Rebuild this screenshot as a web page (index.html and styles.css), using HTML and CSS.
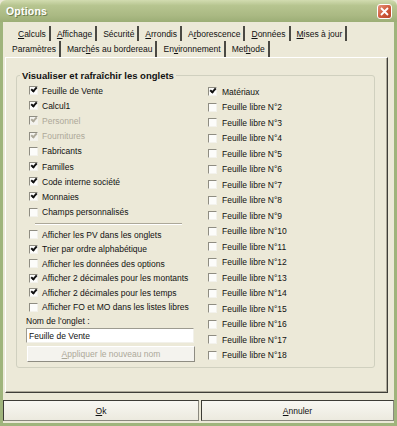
FILE: index.html
```html
<!DOCTYPE html>
<html lang="fr">
<head>
  <meta charset="UTF-8">
  <title>Options</title>
  <link rel="stylesheet" href="styles.css">
</head>
<body>
  <div class="window">
    <div class="titlebar">
      <span class="title">Options</span>
      <span class="close">
        <svg width="9" height="9" viewBox="0 0 9 9"><path d="M1 1L8 8M8 1L1 8" stroke="#fff" stroke-width="1.8"/></svg>
      </span>
    </div>

    <div class="frame">
      <div class="tabrow first">
        <span class="tab"><u>C</u>alculs</span>
        <span class="tab"><u>A</u>ffichage</span>
        <span class="tab">Sécurité</span>
        <span class="tab"><u>A</u>rrondis</span>
        <span class="tab">A<u>r</u>borescence</span>
        <span class="tab"><u>D</u>onnées</span>
        <span class="tab"><u>M</u>ises à jour</span>
      </div>
      <div class="tabrow second">
        <span class="tab">Paramètres</span>
        <span class="tab">Marc<u>h</u>és au bordereau</span>
        <span class="tab active">En<u>v</u>ironnement</span>
        <span class="tab">Met<u>h</u>ode</span>
      </div>

      <div class="panel">
        <fieldset class="group">
          <legend>Visualiser et rafraîchir les onglets</legend>
          <div class="cols">
            <div class="col-left">
              <div class="list">
                <div class="row"><span class="box on"></span>Feuille de Vente</div>
                <div class="row"><span class="box on"></span>Calcul1</div>
                <div class="row disabled"><span class="box on"></span>Personnel</div>
                <div class="row disabled"><span class="box on"></span>Fournitures</div>
                <div class="row"><span class="box"></span>Fabricants</div>
                <div class="row"><span class="box on"></span>Familles</div>
                <div class="row"><span class="box on"></span>Code interne société</div>
                <div class="row"><span class="box on"></span>Monnaies</div>
                <div class="row"><span class="box"></span>Champs personnalisés</div>
              </div>
              <div class="sep"></div>
              <div class="list opts">
                <div class="row"><span class="box"></span>Afficher les PV dans les onglets</div>
                <div class="row"><span class="box on"></span>Trier par ordre alphabétique</div>
                <div class="row"><span class="box"></span>Afficher les données des options</div>
                <div class="row"><span class="box on"></span>Afficher 2 décimales pour les montants</div>
                <div class="row"><span class="box on"></span>Afficher 2 décimales pour les temps</div>
                <div class="row"><span class="box"></span>Afficher FO et MO dans les listes libres</div>
              </div>
              <div class="name-label">Nom de l'onglet :</div>
              <div class="input">Feuille de Vente</div>
              <div class="btn-apply"><u>A</u>ppliquer le nouveau nom</div>
            </div>

            <div class="col-right">
              <div class="row"><span class="box on"></span>Matériaux</div>
              <div class="row"><span class="box"></span>Feuille libre N°2</div>
              <div class="row"><span class="box"></span>Feuille libre N°3</div>
              <div class="row"><span class="box"></span>Feuille libre N°4</div>
              <div class="row"><span class="box"></span>Feuille libre N°5</div>
              <div class="row"><span class="box"></span>Feuille libre N°6</div>
              <div class="row"><span class="box"></span>Feuille libre N°7</div>
              <div class="row"><span class="box"></span>Feuille libre N°8</div>
              <div class="row"><span class="box"></span>Feuille libre N°9</div>
              <div class="row"><span class="box"></span>Feuille libre N°10</div>
              <div class="row"><span class="box"></span>Feuille libre N°11</div>
              <div class="row"><span class="box"></span>Feuille libre N°12</div>
              <div class="row"><span class="box"></span>Feuille libre N°13</div>
              <div class="row"><span class="box"></span>Feuille libre N°14</div>
              <div class="row"><span class="box"></span>Feuille libre N°15</div>
              <div class="row"><span class="box"></span>Feuille libre N°16</div>
              <div class="row"><span class="box"></span>Feuille libre N°17</div>
              <div class="row"><span class="box"></span>Feuille libre N°18</div>
            </div>
          </div>
        </fieldset>
      </div>

      <div class="actions">
        <div class="btn"><u>O</u>k</div>
        <div class="btn"><u>A</u>nnuler</div>
      </div>
    </div>
  </div>
</body>
</html>
```

FILE: styles.css
```css
body {
  margin: 0;
  font-family: "Liberation Sans", Arial, sans-serif;
  font-size: 8.5px;
  color: #111;
  background: #ece9d8;
}
.window {
  width: 397px;
  height: 426px;
  display: flex;
  flex-direction: column;
}
.titlebar {
  height: 22px;
  flex: none;
  box-sizing: border-box;
  padding: 0 5px 0 6px;
  display: flex;
  align-items: center;
  justify-content: space-between;
  border-radius: 6px 6px 0 0;
  background: linear-gradient(#d2dcb0, #b7c590 25%, #aab983 70%, #9cae76);
}
.title {
  color: #fff;
  font-weight: bold;
  font-size: 10.5px;
  letter-spacing: 0.2px;
  text-shadow: 1px 1px 0 #71804f;
}
.close {
  width: 15px;
  height: 15px;
  box-sizing: border-box;
  border: 1px solid #fff;
  border-radius: 3px;
  background: linear-gradient(135deg, #e8927a, #cf5a3a 55%, #b94528);
  display: flex;
  align-items: center;
  justify-content: center;
}
.frame {
  flex: 1;
  display: flex;
  flex-direction: column;
  padding: 4px 0 2px;
  border: 3px solid #9fb47c;
  border-top: 0;
}

/* onglets */
.tabrow {
  display: flex;
  height: 15px;
}
.tabrow.first {
  margin-left: 9px;
}
.tabrow.second {
  height: 16px;
  margin-left: 3px;
}
.tab {
  display: flex;
  align-items: center;
  padding: 0 3px 0 6px;
  border-right: 2px solid #4a4943;
}

.panel {
  height: 336px;
  width: 383px;
  margin-left: 2px;
  box-sizing: border-box;
  border: 1px solid;
  border-color: #fff #3f3e39 #3f3e39 #fff;
  box-shadow: inset -1px -1px 0 #aca899;
}

/* cadre */
.group {
  box-sizing: border-box;
  width: 359px;
  height: 298px;
  margin: 12px 0 0 10px;
  padding: 0;
  border: 1px solid #d0d0bf;
  border-radius: 3px;
}
.group legend {
  margin-left: 3px;
  padding: 0 2px;
  font-weight: bold;
  font-size: 9.5px;
  line-height: 11px;
}
.cols {
  display: grid;
  grid-template-columns: 182px 1fr;
  padding: 2px 0 0 9px;
}
.row {
  display: flex;
  align-items: center;
  gap: 4px;
  white-space: nowrap;
}
.list .row {
  height: 15.2px;
  margin-left: 3px;
}
.list.opts .row {
  height: 14.5px;
}
.col-right {
  margin-top: 1px;
}
.col-right .row {
  height: 15.5px;
  gap: 5px;
}
.disabled {
  color: #aca899;
}
.box {
  width: 9px;
  height: 9px;
  flex: none;
  box-sizing: border-box;
  border: 1px solid;
  border-color: #8f8d82 #f3f2ec #f3f2ec #8f8d82;
  background: #fcfcfa;
  position: relative;
}
.box.on::after {
  content: "";
  position: absolute;
  left: 1px;
  top: 0;
  width: 4px;
  height: 2px;
  border-left: 2px solid #111;
  border-bottom: 2px solid #111;
  transform: rotate(-48deg);
}
.disabled .box {
  background: #f4f3ee;
}
.disabled .box.on::after {
  border-color: #aca899;
}
.sep {
  width: 147px;
  margin: 3px 0 3px 9px;
  border-top: 1px solid #aca899;
  border-bottom: 1px solid #fff;
}
.name-label {
  height: 11px;
  line-height: 11px;
  margin-top: 1.5px;
}
.input {
  width: 168px;
  height: 15px;
  margin-top: 1px;
  box-sizing: border-box;
  padding-left: 2px;
  display: flex;
  align-items: center;
  background: #fff;
  border: 1px solid;
  border-color: #9d9b90 #f2f1ea #f2f1ea #9d9b90;
}
.btn-apply {
  width: 168px;
  height: 16px;
  margin: 2.7px 0 0 1px;
  box-sizing: border-box;
  display: flex;
  align-items: center;
  justify-content: center;
  color: #aca899;
  background: #f4f3ee;
  border: 1px solid;
  border-color: #fff #8e8c82 #8e8c82 #fff;
}

/* boutons */
.actions {
  display: grid;
  grid-template-columns: 196px 193px;
  gap: 2px;
  height: 21px;
  margin-top: 7px;
}
.btn {
  display: flex;
  align-items: center;
  justify-content: center;
  box-sizing: border-box;
  border: 1px solid;
  border-color: #3d3c36 #8a887e #8a887e #3d3c36;
  background: linear-gradient(#f8f7f2, #eceadf);
}
```
